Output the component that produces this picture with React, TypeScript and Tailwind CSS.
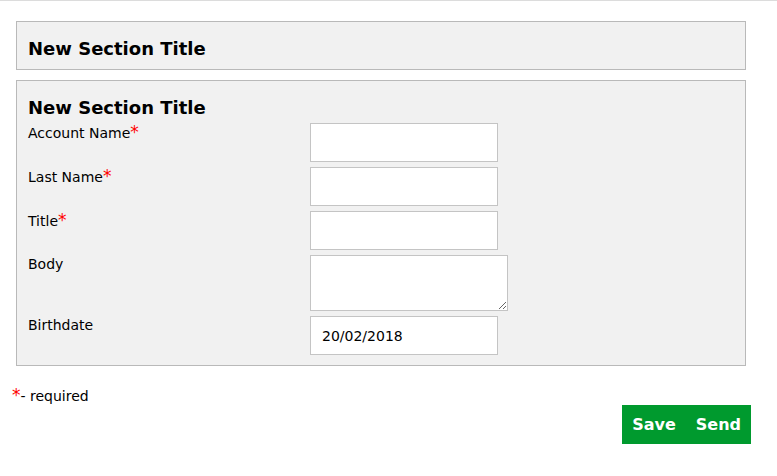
import React from 'react';

const fields = [
  { label: 'Account Name', required: true },
  { label: 'Last Name', required: true },
  { label: 'Title', required: true },
];

function Req() {
  return <span className="text-[17px] leading-[0] text-[#ff0000]">*</span>;
}

export default function App() {
  return (
    <div className="min-h-[476px] w-[777px] border-t border-[#dcdcdc] bg-white font-['DejaVu_Sans',Verdana,sans-serif] text-[14px] text-black">
      <div className="ml-[16px] mt-[20px] w-[730px]">
        <div className="h-[49px] border border-[#b9b9b9] bg-[#f1f1f1] px-[11px] pt-[16px]">
          <h2 className="text-[18px] font-bold leading-[21px]">New Section Title</h2>
        </div>

        <div className="mt-[10px] border border-[#b9b9b9] bg-[#f1f1f1] px-[11px] pt-[16px] pb-[10px]">
          <h2 className="mb-[5px] text-[18px] font-bold leading-[21px]">New Section Title</h2>
          <div className="grid grid-cols-[282px_1fr] gap-y-[5px]">
            {fields.map((f) => (
              <React.Fragment key={f.label}>
                <label className="pt-[2px] leading-[17px]">
                  {f.label}
                  {f.required && <Req />}
                </label>
                <input type="text" className="h-[39px] w-[188px] border border-[#c4c4c4] bg-white px-[11px] outline-none" />
              </React.Fragment>
            ))}
            <label className="pt-[1px] leading-[17px]">Body</label>
            <textarea className="block h-[56px] w-[198px] border border-[#c4c4c4] bg-white px-[11px] outline-none" />
            <label className="pt-[1px] leading-[17px]">Birthdate</label>
            <input
              type="text"
              defaultValue="20/02/2018"
              className="h-[39px] w-[188px] border border-[#c4c4c4] bg-white px-[11px] text-[14px] outline-none"
            />
          </div>
        </div>
      </div>

      <p className="ml-[12px] mt-[22px] leading-[17px]">
        <Req />- required
      </p>

      <div className="mr-[26px] flex justify-end">
        <div className="flex h-[39px] bg-[#009a2e] text-[16px] font-bold text-white">
          <button className="px-[10px]">Save</button>
          <button className="px-[10px]">Send</button>
        </div>
      </div>
    </div>
  );
}
